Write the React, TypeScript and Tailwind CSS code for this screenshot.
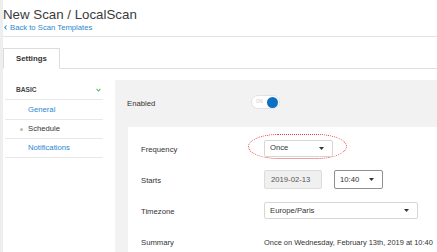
/* Scan template editor — "Settings" tab, Schedule section. */
function Caret() {
  return (
    <svg width="5" height="3" viewBox="0 0 5 3" className="shrink-0">
      <polygon points="0,0 5,0 2.5,3" fill="#333" />
    </svg>
  );
}

function Select({ value, width, className = "" }: { value: string; width: string; className?: string }) {
  return (
    <div
      className={`flex h-[17px] items-center justify-between rounded-[2px] border border-[#d6d6d6] bg-white pl-[5px] pr-[8px] ${width} ${className}`}
    >
      <span>{value}</span>
      <Caret />
    </div>
  );
}

export default function App() {
  return (
    <div className="h-[252px] w-[437px] overflow-hidden border-l-[3px] border-[#eeeeee] bg-white font-['Liberation_Sans',Arial,sans-serif] text-[7.7px] text-[#333]">
      {/* cabecera */}
      <div className="border-b border-[#e3e3e3] pb-[3px] pt-[7px]">
        <h1 className="text-[13.3px] leading-[15px] text-[#3a3a3a]">New Scan / LocalScan</h1>
        <a className="flex h-[11px] items-center text-[#2a88d0]">
          <svg width="3" height="5" viewBox="0 0 3 5" className="ml-[1px] mr-[3px]">
            <polyline points="2.5,0.5 0.8,2.5 2.5,4.5" fill="none" stroke="#2a88d0" strokeWidth="1.1" />
          </svg>
          Back to Scan Templates
        </a>
      </div>

      {/* pestañas */}
      <div className="mt-[11px] flex border-b border-[#e0e0e0]">
        <div className="-mb-px flex h-[21px] w-[57px] items-center border border-[#dcdcdc] border-b-white bg-white pl-[12px] text-[7.8px] font-bold text-[#333]">
          Settings
        </div>
      </div>

      <div className="flex pt-[11px]">
        {/* menú lateral */}
        <div className="ml-[2px] w-[98px] shrink-0">
          <div className="flex h-[20px] items-center justify-between border-b border-[#e8e8e8] pl-[11px] pr-[2px]">
            <span className="text-[6.6px] font-bold text-[#444]">BASIC</span>
            <svg width="5" height="4" viewBox="0 0 5 4">
              <polyline points="0.6,0.8 2.5,3 4.4,0.8" fill="none" stroke="#5cb85c" strokeWidth="1.1" />
            </svg>
          </div>
          <div className="flex h-[20px] items-center border-b border-[#e8e8e8] pl-[23px] text-[#2a88d0]">General</div>
          <div className="flex h-[19px] items-center border-b border-[#e8e8e8] pl-[15px]">
            <span className="mr-[5px] h-[3px] w-[3px] rounded-full bg-[#bbbbbb]" />
            Schedule
          </div>
          <div className="flex h-[19px] items-center border-b border-[#e8e8e8] pl-[23px] text-[#2a88d0]">Notifications</div>
        </div>

        {/* contenido */}
        <div className="ml-[12px] min-w-0 flex-1 bg-[#f2f2f2] pl-[12px]">
          <div className="flex h-[47px] items-center">
            <span className="w-[124px]">Enabled</span>
            <div className="-mt-[3px] flex h-[14px] w-[29px] items-center justify-between rounded-full border border-[#e2e2e2] bg-white pl-[4px] pr-[1px]">
              <span className="text-[4.5px] text-[#c8c8c8]">ON</span>
              <span className="h-[11px] w-[11px] rounded-full bg-[#0b6fc2]" />
            </div>
          </div>

          <div className="ml-[1px] h-[200px] bg-white pl-[13px] pt-[7px]">
            <div className="relative flex h-[31px] items-center">
              <span className="w-[123px]">Frequency</span>
              <Select value="Once" width="w-[69px]" className="-mt-[3px]" />
              <div className="absolute left-[107px] top-0 h-[25px] w-[99px] rounded-[30px/12.5px] border border-dotted border-[#e23b3b]" />
            </div>
            <div className="flex h-[31px] items-center">
              <span className="w-[123px]">Starts</span>
              <div className="-mt-[2px] flex h-[19px] w-[58px] items-center rounded-[2px] border border-[#dcdcdc] bg-[#f0f0f0] pl-[6px] text-[#555]">
                2019-02-13
              </div>
              <div className="-mt-[2px] ml-[12px] flex h-[19px] w-[49px] items-center justify-between rounded-[2px] border border-[#8f8f8f] bg-white pl-[5px] pr-[8px]">
                <span>10:40</span>
                <Caret />
              </div>
            </div>
            <div className="flex h-[31px] items-center">
              <span className="w-[123px]">Timezone</span>
              <Select value="Europe/Paris" width="w-[154px]" className="-mt-[2px]" />
            </div>
            <div className="flex h-[31px] items-center whitespace-nowrap">
              <span className="w-[123px] shrink-0">Summary</span>
              <span className="text-[7.45px]">Once on Wednesday, February 13th, 2019 at 10:40</span>
            </div>
          </div>
        </div>
      </div>
    </div>
  );
}
